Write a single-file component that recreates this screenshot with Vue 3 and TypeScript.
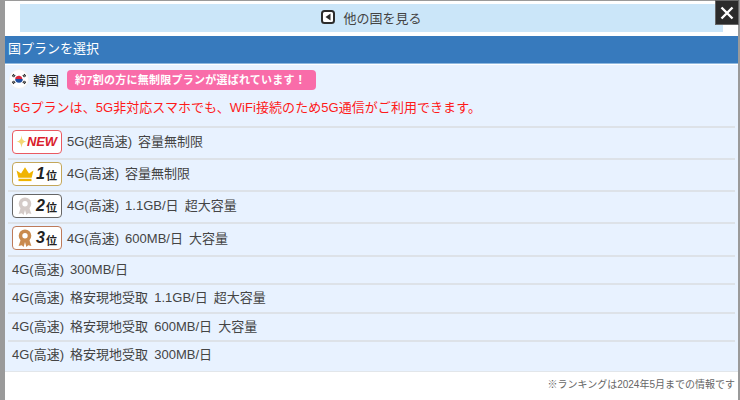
<script setup lang="ts">
interface Plan { label: string; badge?: string; rank?: string }
const plans: Plan[] = [
  { label: '5G(超高速) 容量無制限', badge: 'new' },
  { label: '4G(高速) 容量無制限', badge: 'gold', rank: '1' },
  { label: '4G(高速) 1.1GB/日 超大容量', badge: 'silver', rank: '2' },
  { label: '4G(高速) 600MB/日 大容量', badge: 'bronze', rank: '3' },
  { label: '4G(高速) 300MB/日' },
  { label: '4G(高速) 格安現地受取 1.1GB/日 超大容量' },
  { label: '4G(高速) 格安現地受取 600MB/日 大容量' },
  { label: '4G(高速) 格安現地受取 300MB/日' },
]
const medalColor: Record<string, string> = { silver: '#d4cbc8', bronze: '#c98a4e' }
</script>

<template>
  <div class="frame">
    <div class="panel">
      <div class="top">
        <div class="back">
          <svg class="back-icon" width="14" height="14" viewBox="0 0 14 14">
            <rect x="1" y="1" width="12" height="12" rx="2.500" fill="#fff" stroke="#2c2c2c" stroke-width="2" />
            <path d="M9.500 3.500v7L4.500 7z" fill="#2c2c2c" />
          </svg>
          <span>他の国を見る</span>
        </div>
      </div>
      <div class="head">国プランを選択</div>
      <div class="body">
        <div class="country">
          <svg class="flag" width="20" height="20" viewBox="0 0 20 20">
            <circle cx="10" cy="10" r="9.500" fill="#fff" stroke="#f2f2f2" />
            <path d="M6.600 8.200a3.800 3.800 0 0 1 6.800 1.800H6.200z" fill="#d8263c" />
            <path d="M6.200 10h7.600a3.800 3.800 0 0 1-7.600 0z" fill="#1f4fa0" />
            <g stroke="#222" stroke-width="1.100">
              <path d="M3.200 7.300l1.700-2.200M4.500 8.200l1.700-2.200" />
              <path d="M15.100 5.100l1.700 2.200M13.800 6l1.700 2.200" />
              <path d="M3.200 12.700l1.700 2.200M4.500 11.800l1.700 2.200" />
              <path d="M16.800 12.700l-1.700 2.200M15.500 11.800l-1.700 2.200" />
            </g>
          </svg>
          <span class="name">韓国</span>
          <span class="pill">約7割の方に無制限プランが選ばれています！</span>
        </div>
        <p class="note">5Gプランは、5G非対応スマホでも、WiFi接続のため5G通信がご利用できます。</p>
        <ul class="list">
          <li v-for="p in plans" :key="p.label" class="row" :class="{ ranked: p.badge }">
            <span v-if="p.badge" class="badge" :class="p.badge">
              <template v-if="p.badge === 'new'">
                <svg class="rank-icon" width="11" height="15" viewBox="0 0 13 17">
                  <path d="M6.500 1C7.200 6 8 7.600 12.500 8.500 8 9.400 7.200 11 6.500 16 5.800 11 5 9.400.5 8.500 5 7.600 5.800 6 6.500 1z" fill="#f3d774" />
                </svg>
                <b class="new-text">NEW</b>
              </template>
              <template v-else>
                <svg v-if="p.badge === 'gold'" class="rank-icon" width="18" height="16" viewBox="0 0 20 17">
                  <path d="M2.600 12.600 .6 4.600l5 3.400L10 1l4.400 7 5-3.400-2 8z" fill="#f0b400" />
                  <rect x="2.800" y="13.800" width="14.400" height="2.600" fill="#f0b400" />
                </svg>
                <svg v-else class="rank-icon" width="18" height="18" viewBox="0 0 18 18">
                  <path d="M5 10 2.600 17l3.200-.8L7.600 18l1.400-5 1.400 5 1.800-1.800 3.200.8L13 10z" :fill="medalColor[p.badge]" />
                  <circle cx="9" cy="6.800" r="4.500" fill="#fff" :stroke="medalColor[p.badge]" stroke-width="3.600" />
                </svg>
                <b class="num">{{ p.rank }}</b><b class="pos">位</b>
              </template>
            </span>
            <span class="label">{{ p.label }}</span>
          </li>
        </ul>
      </div>
      <div class="foot">※ランキングは2024年5月までの情報です</div>
    </div>
    <button class="close" aria-label="閉じる">
      <svg width="16" height="16" viewBox="0 0 16 16">
        <path d="M2.500 2.500l11 11M13.500 2.500l-11 11" stroke="#fff" stroke-width="2.400" />
      </svg>
    </button>
  </div>
</template>

<style>
html, body { margin: 0; background: #8f8f8f; }
</style>

<style scoped>
.frame {
  position: relative;
  width: 740px;
  height: 400px;
  overflow: hidden;
  padding: 1px 2px 0 5px;
  box-sizing: border-box;
  background: #9a9a9a;
  font-family: "Liberation Sans", "Noto Sans CJK JP", sans-serif;
  color: #333;
}
.panel {
  height: 399px;
  background: #fff;
  display: flex;
  flex-direction: column;
}
.top { padding: 3px 15px 4px; }
.back {
  height: 28px;
  padding-bottom: 2px;
  box-sizing: border-box;
  background: #cbe6f9;
  display: flex;
  align-items: center;
  justify-content: center;
  gap: 8px;
  font-size: 13px;
  color: #444;
}
.back-icon { display: block; }
.head {
  height: 27px;
  margin-bottom: 2px;
  background: #377abd;
  color: #fff;
  font-size: 13px;
  line-height: 26px;
  padding-left: 3px;
  box-shadow: 0 1px 0 #8fb8df;
}
.body {
  background: #e8f2ff;
  height: 307px;
  border-bottom: 1px solid #e2e6ea;
  box-sizing: border-box;
}
.country {
  height: 30px;
  padding-bottom: 2px;
  box-sizing: border-box;
  display: flex;
  align-items: center;
  padding-left: 4px;
  font-size: 13px;
}
.flag { display: block; }
.name { margin-left: 4px; color: #222; }
.pill {
  margin: 2px 0 0 8px;
  height: 20px;
  padding: 0 10px 0 8px;
  background: #f96ca9;
  color: #fff;
  font-weight: 700;
  font-size: 11px;
  letter-spacing: .25px;
  line-height: 20px;
  border-radius: 4px;
}
.note {
  margin: 0;
  height: 31px;
  padding-left: 8px;
  color: #fe1a1a;
  font-size: 13px;
  letter-spacing: .05px;
  line-height: 26px;
}
.list { list-style: none; margin: 0; padding: 0 3px; }
.row {
  height: 28.300px;
  display: flex;
  align-items: center;
  padding: 0 0 3px 4px;
  font-size: 13px;
  word-spacing: 2.500px;
  border-top: 2px solid #dde2e8;
  box-sizing: border-box;
  color: #444;
}
.row.ranked { height: 32px; padding-bottom: 3px; }
.row.ranked .label { padding-bottom: 2px; }
.row:nth-child(4) { height: 33px; }
.row:last-child { height: 32px; padding-bottom: 7px; }
.badge {
  width: 50px;
  height: 24px;
  box-sizing: border-box;
  margin-right: 5px;
  display: flex;
  align-items: center;
  padding-left: 3px;
  border: 1px solid #999;
  border-radius: 4px;
  background: #fff;
  color: #222;
  flex: none;
}
.badge.new { border-color: #ea5a62; }
.badge.gold { border-color: #c4a75a; }
.badge.silver { border-color: #666; }
.badge.bronze { border-color: #bd7a5a; }
.rank-icon { flex: none; }
.new-text {
  font-size: 13px;
  font-style: italic;
  color: #d9202c;
  letter-spacing: -.2px;
}
.num { font-size: 16px; font-style: italic; margin-left: 2px; }
.pos { font-size: 11px; margin-left: 1px; margin-top: 3px; }
.foot {
  text-align: right;
  font-size: 10px;
  color: #666;
  padding: 4px 3px 0 0;
}
.close {
  position: absolute;
  top: 0;
  right: 1px;
  width: 24px;
  height: 25px;
  padding: 0;
  border: 1px solid #666;
  background: #2b2b2b;
  display: flex;
  align-items: center;
  justify-content: center;
}
</style>
